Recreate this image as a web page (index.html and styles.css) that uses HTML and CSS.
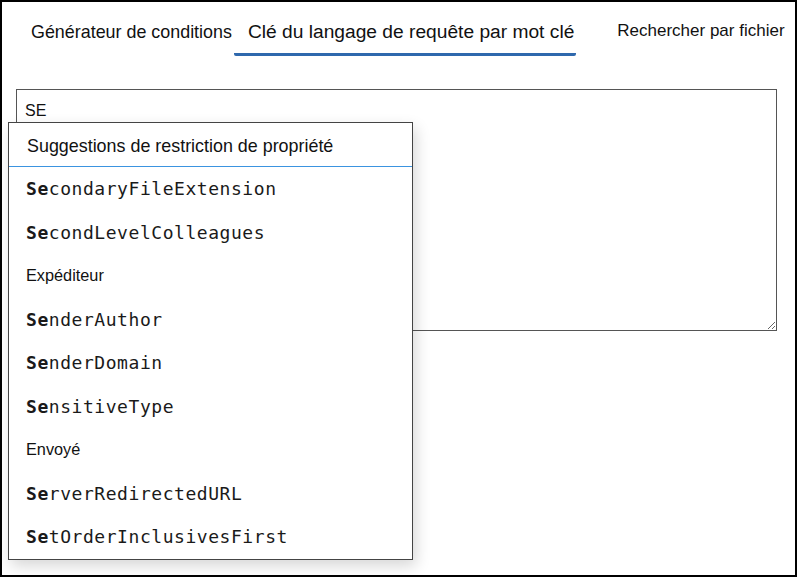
FILE: index.html
```html
<!DOCTYPE html>
<html lang="fr">

<head>
    <meta charset="UTF-8">
    <meta name="viewport" content="width=device-width, initial-scale=1.0">
    <title>Clé du langage de requête par mot clé</title>
    <link rel="stylesheet" href="styles.css">
</head>

<body>
    <div class="frame">
        <!-- Tabs -->
        <div class="tabs">
            <div class="tab">Générateur de conditions</div>
            <div class="tab active">Clé du langage de requête par mot clé</div>
            <div class="tab small">Rechercher par fichier</div>
        </div>

        <!-- Query box -->
        <div class="query">
            <textarea class="query-input">SE</textarea>
        </div>

        <!-- Suggestions dropdown -->
        <div class="suggestions">
            <div class="suggestions-title">Suggestions de restriction de propriété</div>
            <ul class="suggestion-list">
                <li class="prop"><b>Se</b>condaryFileExtension</li>
                <li class="prop"><b>Se</b>condLevelColleagues</li>
                <li class="label">Expéditeur</li>
                <li class="prop"><b>Se</b>nderAuthor</li>
                <li class="prop"><b>Se</b>nderDomain</li>
                <li class="prop"><b>Se</b>nsitiveType</li>
                <li class="label">Envoyé</li>
                <li class="prop"><b>Se</b>rverRedirectedURL</li>
                <li class="prop"><b>Se</b>tOrderInclusivesFirst</li>
            </ul>
        </div>
    </div>
</body>

</html>
```

FILE: styles.css
```css
body {
    margin: 0;
    font-family: "Liberation Sans", Arial, sans-serif;
    background: #fff;
    color: #111;
}

.frame {
    position: relative;
    width: 797px;
    height: 577px;
    box-sizing: border-box;
    border: 2px solid #000;
}

.tabs {
    display: flex;
    align-items: flex-start;
    height: 56px;
    padding-left: 29px;
}

.tab {
    font-size: 17.9px;
    padding-top: 20px;
    margin-right: 2px;
    white-space: nowrap;
}

.tab.active {
    font-size: 19.2px;
    padding: 19px 2px 10px 14px;
    margin-right: 41px;
    border-bottom: 3px solid #2f68ad;
    border-radius: 2px;
}

.tab.small {
    font-size: 17px;
    padding-top: 19px;
    margin-right: 0;
}

.query {
    padding: 31px 0 0 14px;
}

.query-input {
    display: block;
    width: 761px;
    height: 242px;
    box-sizing: border-box;
    border: 1px solid #555;
    padding: 12px 8px;
    font-family: "Liberation Sans", Arial, sans-serif;
    font-size: 16px;
    color: #111;
    resize: both;
    outline: none;
}

.suggestions {
    position: absolute;
    left: 6px;
    top: 120px;
    width: 405px;
    background: #fff;
    border: 1px solid #444;
    box-sizing: border-box;
    box-shadow: 3px 6px 14px rgba(0, 0, 0, 0.16);
}

.suggestions-title {
    height: 44px;
    box-sizing: border-box;
    padding: 13px 0 0 18px;
    font-size: 17.9px;
    border-bottom: 1px solid #3b94e0;
}

.suggestion-list {
    list-style: none;
    margin: 0;
    padding: 0;
}

.suggestion-list li {
    height: 43.5px;
    box-sizing: border-box;
    padding-left: 17px;
    display: flex;
    align-items: center;
}

.prop {
    font-family: "DejaVu Sans Mono", monospace;
    font-size: 18px;
    letter-spacing: 0.55px;
    color: #1a1a1a;
}

.prop b {
    font-weight: bold;
}

.label {
    font-size: 16.3px;
}
```
